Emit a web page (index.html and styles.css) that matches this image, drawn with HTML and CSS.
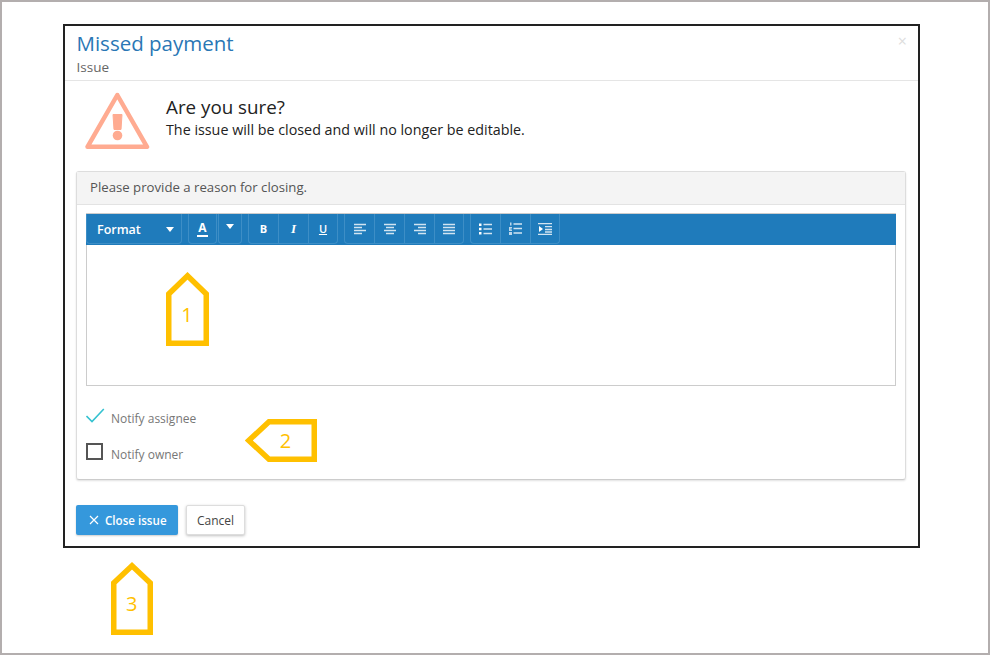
FILE: index.html
```html
<!DOCTYPE html>
<html>
<head>
	<title>Missed payment</title>
	<meta charset="utf-8">
	<link rel="stylesheet" href="styles.css">
</head>
<body>
	<div class="frame">
		<div class="modal">
			<div class="head">
				<h1>Missed payment</h1>
				<p>Issue</p>
				<a class="close" href="#">×</a>
			</div>
			<!--warning-->
			<div class="alert">
				<svg class="warn" width="66" height="58" viewBox="0 0 66 58">
					<path d="M33.300 3 L63 54.800 H3.500 Z" fill="none" stroke="#ffab91" stroke-width="4.500" stroke-linejoin="round"/>
					<path d="M29 22.500 H38 L37 37.500 H30 Z" fill="#ffab91" stroke="#ffab91" stroke-linejoin="round"/>
					<circle cx="33.500" cy="43.500" r="4.800" fill="#ffab91"/>
				</svg>
				<div class="alert-text">
					<h2>Are you sure?</h2>
					<p>The issue will be closed and will no longer be editable.</p>
				</div>
			</div>
			<div class="panel">
				<div class="panel-head">Please provide a reason for closing.</div>
				<div class="panel-body">
					<div class="editor">
						<div class="toolbar">
							<div class="group"><button class="btn format">Format<i class="caret"></i></button></div>
							<div class="group">
								<button class="btn color"><span>A</span></button>
							</div>
							<div class="group arrow-group">
								<button class="btn arrow"><i class="caret"></i></button>
							</div>
							<div class="group">
								<button class="btn txt bold">B</button>
								<button class="btn txt ital">I</button>
								<button class="btn txt under">U</button>
							</div>
							<div class="group">
								<button class="btn"><svg width="12" height="12" viewBox="0 0 12 12"><path d="M0 1.500H12M0 4.500H8M0 7.500H12M0 10.500H8" class="ln"/></svg></button>
								<button class="btn"><svg width="12" height="12" viewBox="0 0 12 12"><path d="M0 1.500H12M2 4.500H10M0 7.500H12M2 10.500H10" class="ln"/></svg></button>
								<button class="btn"><svg width="12" height="12" viewBox="0 0 12 12"><path d="M0 1.500H12M4 4.500H12M0 7.500H12M4 10.500H12" class="ln"/></svg></button>
								<button class="btn"><svg width="12" height="12" viewBox="0 0 12 12"><path d="M0 1.500H12M0 4.500H12M0 7.500H12M0 10.500H12" class="ln"/></svg></button>
							</div>
							<div class="group">
								<button class="btn"><svg width="13" height="12" viewBox="0 0 13 12"><path d="M4.500 1.500H13M4.500 6H13M4.500 10.500H13" class="ln"/><path d="M0 0.500h2.500v2.500H0zM0 4.800h2.500v2.500H0zM0 9h2.500v2.500H0z" fill="#fff"/></svg></button>
								<button class="btn"><svg width="13" height="13" viewBox="0 0 13 13"><path d="M4.500 2H13M4.500 6.500H13M4.500 11H13" class="ln"/><path d="M1 0.500h1.500v3H1zM0 5h3v1.500H1.500v1H3V9H0zM0 10h3v3H0z" fill="#fff" opacity=".7"/></svg></button>
								<button class="btn"><svg width="14" height="12" viewBox="0 0 14 12"><path d="M0 0.700H14M7 3.700H14M7 6.500H14M7 9H14M0 11.300H14" class="ln"/><path d="M1 3 L5 6 L1 9 Z" fill="#fff"/></svg></button>
							</div>
						</div>
						<div class="editor-area"></div>
					</div>
					<label class="check first">
						<svg class="tick" width="20" height="16" viewBox="0 0 20 16"><path d="M0.500 8 L6 13.500 L17.800 1" fill="none" stroke="#35c2d0" stroke-width="1.600"/></svg>
						<span>Notify assignee</span>
					</label>
					<label class="check">
						<i class="box"></i>
						<span>Notify owner</span>
					</label>
				</div>
			</div>
			<div class="actions">
				<button class="primary"><svg width="10" height="10" viewBox="0 0 10 10"><path d="M1 1L9 9M9 1L1 9" stroke="#fff" stroke-width="1.200"/></svg>Close issue</button>
				<button class="cancel">Cancel</button>
			</div>
		</div>
		<!--callouts-->
		<svg class="mark mark-1" width="43" height="74" viewBox="0 0 43 74">
			<path d="M2.750 71.250 V22 L21.500 3.800 L40.250 22 V71.250 Z" class="mark-line"/>
			<text x="21" y="49.500" class="mark-num">1</text>
		</svg>
		<svg class="mark mark-2" width="72" height="43" viewBox="0 0 72 43">
			<path d="M69.250 2.750 H24 L3.800 21.500 L24 40.250 H69.250 Z" class="mark-line"/>
			<text x="40.500" y="29" class="mark-num">2</text>
		</svg>
		<svg class="mark mark-3" width="42" height="73" viewBox="0 0 42 73">
			<path d="M2.750 70.250 V21 L21 3.800 L39.250 21 V70.250 Z" class="mark-line"/>
			<text x="20.700" y="48.700" class="mark-num">3</text>
		</svg>
	</div>
</body>
</html>
```

FILE: styles.css
```css
*{
	margin:0;
	padding:0;
	box-sizing:border-box;
}
body{
	background:#fff;
	font-family:"Open Sans","Liberation Sans",sans-serif;
	color:#333;
	overflow:hidden;
}
.frame{
	position:relative;
	width:990px;
	height:655px;
	border:2px solid #b3aeae;
	padding:22px 0 0 61px;
}
.modal{
	width:857px;
	height:524px;
	border:2px solid #222;
	background:#fff;
}
.head{
	position:relative;
	height:55px;
	border-bottom:1px solid #e5e5e5;
	padding:4px 11.5px 0;
}
.head h1{
	font-size:20.5px;
	line-height:27px;
	font-weight:400;
	color:#2a77b5;
}
.head p{
	margin-top:1px;
	font-size:13.5px;
	line-height:18px;
	color:#666;
}
.head .close{
	position:absolute;
	top:5px;
	right:11px;
	font-size:16px;
	line-height:20px;
	color:#ddd;
	text-decoration:none;
}
.alert{
	display:flex;
	height:90px;
	padding:11px 0 0 19px;
}
.warn{
	flex:none;
}
.alert-text{
	margin-left:16px;
	padding-top:3px;
	color:#222;
}
.alert-text h2{
	font-size:18.8px;
	line-height:25px;
	font-weight:400;
}
.alert-text p{
	font-size:14.3px;
	line-height:20px;
}
.panel{
	width:830px;
	height:309px;
	margin-left:11px;
	border:1px solid #ddd;
	border-bottom:1px solid #ccc;
	border-radius:3px;
	box-shadow:0 1px 2px rgba(0,0,0,0.12);
}
.panel-head{
	height:33px;
	background:#f4f4f4;
	border-bottom:1px solid #e3e3e3;
	padding-left:13px;
	font-size:13.2px;
	line-height:30px;
	color:#555;
}
.panel-body{
	padding:8px 9px 0;
}
.editor{
	border:1px solid #ccc;
	height:173px;
}
.toolbar{
	display:flex;
	gap:6px;
	height:31px;
	margin:0 -1px;
	background:#1f7bbb;
}
.group{
	display:flex;
	border:1px solid #3d8ec6;
	border-top:none;
	border-radius:0 0 4px 4px;
	height:30px;
}
.arrow-group{
	margin-left:-5px;
}
.btn{
	display:flex;
	align-items:center;
	justify-content:center;
	width:30px;
	height:100%;
	background:none;
	border:none;
	border-right:1px solid #3d8ec6;
	color:#fff;
	font-family:inherit;
}
.btn:last-child{
	width:28px;
	border-right:none;
}
.ln{
	fill:none;
	stroke:#fff;
	stroke-width:1.300;
	opacity:.8;
}
.btn.format{
	width:94px;
	justify-content:space-between;
	padding:1px 7px 0 10px;
	font-size:12.5px;
	font-weight:600;
}
.caret{
	width:0;
	height:0;
	border-left:4px solid transparent;
	border-right:4px solid transparent;
	border-top:5px solid #fff;
}
.btn.color{
	width:27px;
}
.color span{
	font-size:12px;
	font-weight:700;
	line-height:14px;
	border-bottom:2px solid #fff;
	padding:0 1px;
}
.btn.arrow{
	width:22px;
	padding-bottom:4px;
}
.txt{
	font-size:11px;
}
.bold{
	font-weight:700;
}
.ital{
	font-family:"Liberation Serif",serif;
	font-size:13px;
	font-style:italic;
	font-weight:700;
}
.under{
	font-weight:600;
	text-decoration:underline;
}
.editor-area{
	height:140px;
	background:#fff;
}
.check{
	display:flex;
	align-items:center;
	height:18px;
	margin-top:18px;
	font-size:12px;
	color:#777;
}
.check.first{
	margin-top:23px;
}
.check span{
	margin-left:8px;
}
.tick{
	margin-right:-3px;
	margin-top:-4px;
	flex:none;
}
.check .box{
	flex:none;
	width:17px;
	height:17px;
	border:2px solid #555;
	margin-top:-5px;
}
.actions{
	display:flex;
	gap:8px;
	padding:25px 0 0 11px;
}
.actions button{
	height:30px;
	font-family:inherit;
	font-size:12px;
	border-radius:2px;
}
.actions .primary{
	display:flex;
	align-items:center;
	gap:6px;
	width:102px;
	padding-left:13px;
	background:#3598dc;
	border:none;
	color:#fff;
	font-size:11.6px;
	font-weight:600;
	box-shadow:0 1px 2px rgba(0,0,0,0.2);
}
.cancel{
	width:59px;
	background:#fff;
	border:1px solid #ddd;
	color:#444;
	box-shadow:0 1px 3px rgba(0,0,0,0.25);
}
/* callouts sit over the page */
.mark{
	position:absolute;
}
.mark-1{
	left:164px;
	top:270px;
}
.mark-2{
	left:243px;
	top:417px;
}
.mark-3{
	left:109px;
	top:560px;
}
.mark-line{
	fill:none;
	stroke:#ffc000;
	stroke-width:5.500;
}
.mark-num{
	font-family:"Open Sans",sans-serif;
	font-size:20px;
	fill:#ffc000;
	text-anchor:middle;
}
```
